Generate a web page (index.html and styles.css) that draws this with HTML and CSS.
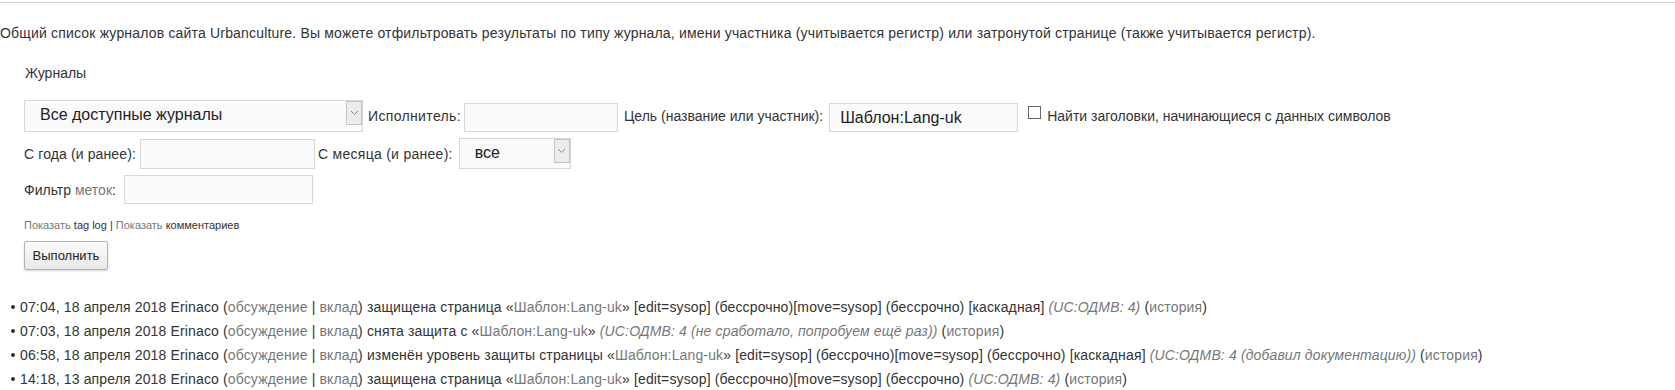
FILE: index.html
```html
<!DOCTYPE html>
<html lang="ru">
<head>
<meta charset="utf-8">
<title>Журналы</title>
<link rel="stylesheet" href="styles.css">
</head>
<body>
<div class="topline"></div>
<p class="intro">Общий список журналов сайта Urbanculture. Вы можете отфильтровать результаты по типу журнала, имени участника (учитывается регистр) или затронутой странице (также учитывается регистр).</p>
<form class="logform">
  <div class="legend">Журналы</div>
  <div class="row row1">
    <div class="select sel-type"><span class="sel-text">Все доступные журналы</span><span class="arrow"><svg width="9" height="6" viewBox="0 0 9 6"><path d="M1 1 L4.5 4.5 L8 1" fill="none" stroke="#8a8a8a" stroke-width="1"/></svg></span></div>
    <label class="lbl l-performer">Исполнитель:</label>
    <div class="input in-performer"></div>
    <label class="lbl l-target">Цель (название или участник):</label>
    <div class="input in-target">Шаблон:Lang-uk</div>
    <span class="checkbox"></span>
    <label class="lbl l-prefix">Найти заголовки, начинающиеся с данных символов</label>
  </div>
  <div class="row row2">
    <label class="lbl l-year">С года (и ранее):</label>
    <div class="input in-year"></div>
    <label class="lbl l-month">С месяца (и ранее):</label>
    <div class="select sel-month"><span class="sel-text">все</span><span class="arrow"><svg width="9" height="6" viewBox="0 0 9 6"><path d="M1 1 L4.5 4.5 L8 1" fill="none" stroke="#8a8a8a" stroke-width="1"/></svg></span></div>
  </div>
  <div class="row row3">
    <label class="lbl">Фильтр <span class="gray">меток</span>:</label>
    <div class="input in-tag"></div>
  </div>
  <div class="taglinks"><span class="gray">Показать</span> tag log | <span class="gray">Показать</span> комментариев</div>
  <div class="btnrow"><span class="button">Выполнить</span></div>
</form>
<ul class="log">
  <li>07:04, 18 апреля 2018 Erinaco (<span class="gray">обсуждение</span> | <span class="gray">вклад</span>) защищена страница «<span class="gray">Шаблон:Lang-uk</span>» [edit=sysop] (бессрочно)[move=sysop] (бессрочно) [каскадная] <span class="comment">(UC:ОДМВ: 4)</span> (<span class="gray">история</span>)</li>
  <li>07:03, 18 апреля 2018 Erinaco (<span class="gray">обсуждение</span> | <span class="gray">вклад</span>) снята защита с «<span class="gray">Шаблон:Lang-uk</span>» <span class="comment">(UC:ОДМВ: 4 (не сработало, попробуем ещё раз))</span> (<span class="gray">история</span>)</li>
  <li>06:58, 18 апреля 2018 Erinaco (<span class="gray">обсуждение</span> | <span class="gray">вклад</span>) изменён уровень защиты страницы «<span class="gray">Шаблон:Lang-uk</span>» [edit=sysop] (бессрочно)[move=sysop] (бессрочно) [каскадная] <span class="comment">(UC:ОДМВ: 4 (добавил документацию))</span> (<span class="gray">история</span>)</li>
  <li>14:18, 13 апреля 2018 Erinaco (<span class="gray">обсуждение</span> | <span class="gray">вклад</span>) защищена страница «<span class="gray">Шаблон:Lang-uk</span>» [edit=sysop] (бессрочно)[move=sysop] (бессрочно) <span class="comment">(UC:ОДМВ: 4)</span> (<span class="gray">история</span>)</li>
</ul>
</body>
</html>
```

FILE: styles.css
```css
html, body {
  margin: 0;
  padding: 0;
  background: #fff;
}
body {
  font-family: "Liberation Sans", Arial, sans-serif;
  font-size: 14px;
  color: #333;
  overflow: hidden;
}
.topline {
  margin-top: 2px;
  border-top: 1px solid #cfcfcf;
}
.intro {
  margin: 20px 0 0 0;
  line-height: 20px;
  letter-spacing: 0.18px;
}
.logform {
  margin: 20px 0 0 24px;
}
.legend {
  line-height: 20px;
  padding-left: 1px;
}
.row {
  display: flex;
  align-items: flex-end;
}
.row1 { margin-top: 17px; height: 32px; }
.row2 { margin-top: 6px; height: 31px; }
.row3 { margin-top: 6px; height: 29px; }
.lbl {
  align-self: center;
  line-height: 18px;
  white-space: nowrap;
}
.gray { color: #777; }
.input {
  box-sizing: border-box;
  border: 1px solid #d8d8d8;
  background: #fafafa;
  height: 29px;
  font-size: 16px;
  line-height: 27px;
  padding-left: 10px;
  color: #222;
  white-space: nowrap;
}
.select {
  position: relative;
  box-sizing: border-box;
  border: 1px solid #d8d8d8;
  background: #fafafa;
  font-size: 16px;
  color: #222;
  white-space: nowrap;
}
.sel-type { width: 339px; height: 32px; line-height: 28px; padding-left: 15px; }
.sel-month { width: 112px; height: 31px; line-height: 27px; padding-left: 15px; margin-left: 6px; }
.arrow {
  position: absolute;
  top: 0;
  right: 0;
  box-sizing: border-box;
  width: 16px;
  height: 24px;
  border: 1px solid #c4c4c4;
  background: #ececec;
  display: flex;
  align-items: center;
  justify-content: center;
}
.l-performer { margin-left: 5px; letter-spacing: 0.35px; }
.in-performer { width: 154px; margin-left: 3px; }
.l-target { margin-left: 6px; }
.in-target { width: 189px; margin-left: 6px; }
.checkbox {
  align-self: flex-start;
  margin-top: 6px;
  margin-left: 10px;
  box-sizing: border-box;
  width: 13px;
  height: 13px;
  border: 1px solid #666;
  background: #fff;
}
.l-prefix { margin-left: 6px; }
.l-year { letter-spacing: 0.12px; }
.in-year { width: 175px; height: 30px; margin-left: 4px; }
.l-month { margin-left: 3px; letter-spacing: 0.28px; }
.in-tag { width: 189px; margin-left: 8px; }
.taglinks {
  margin-top: 14px;
  font-size: 11px;
  line-height: 14px;
  color: #333;
}
.btnrow {
  margin-top: 9px;
  display: flex;
}
.button {
  box-sizing: border-box;
  height: 29px;
  width: 84px;
  border: 1px solid #b4b4b4;
  border-radius: 2px;
  background: linear-gradient(#fbfbfb, #e8e8e8);
  box-shadow: 0 1px 2px rgba(0,0,0,0.18);
  font-size: 13px;
  line-height: 27px;
  text-align: center;
  color: #222;
}
.log {
  list-style: none;
  margin: 25px 0 0 0;
  padding: 0 0 0 22px;
  letter-spacing: 0.14px;
}
.log li {
  line-height: 24px;
  white-space: nowrap;
}
.log li::before {
  content: "";
  display: inline-block;
  width: 4px;
  height: 4px;
  border-radius: 50%;
  background: #333;
  vertical-align: middle;
  margin: 0 5px 2px -11px;
}
.comment {
  font-style: italic;
  color: #777;
}
```
